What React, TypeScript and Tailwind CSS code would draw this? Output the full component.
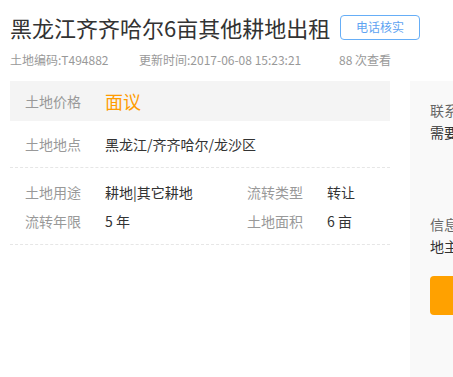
export default function App() {
  const details = [
    [
      ["土地用途", "耕地|其它耕地"],
      ["流转类型", "转让"],
    ],
    [
      ["流转年限", "5 年"],
      ["土地面积", "6 亩"],
    ],
  ];

  return (
    <div className="w-[453px] h-[377px] overflow-hidden bg-white font-['Noto_Sans_CJK_SC','Noto_Sans',sans-serif]">
      <div className="flex items-center px-[10px] pt-[11px]">
        <h1 className="w-[330px] whitespace-nowrap text-[22px] leading-[32px] text-[#333]">
          黑龙江齐齐哈尔6亩其他耕地出租
        </h1>
        <button className="w-[80px] h-[25px] border border-[#66aef7] rounded-[4px] text-[12px] text-[#5ea3f2] leading-none">
          电话核实
        </button>
      </div>

      <div className="flex px-[10px] mt-[7px] text-[12px] leading-[20px] text-[#999] whitespace-nowrap">
        <span className="w-[129px]">土地编码:T494882</span>
        <span className="w-[200px]">更新时间:2017-06-08 15:23:21</span>
        <span>88 次查看</span>
      </div>

      <div className="flex mt-[11px] pl-[10px]">
        <div className="w-[380px] shrink-0">
          <div className="flex items-center h-[40px] px-[15px] bg-[#f4f4f4]">
            <span className="w-[80px] text-[14px] text-[#999]">土地价格</span>
            <span className="text-[18px] text-[#ff9c00]">面议</span>
          </div>
          <div className="flex items-center h-[47px] px-[15px] border-b border-dashed border-[#e6e6e6]">
            <span className="w-[80px] text-[14px] text-[#999]">土地地点</span>
            <span className="text-[14px] text-[#333]">黑龙江/齐齐哈尔/龙沙区</span>
          </div>
          <div className="pt-[10px] pb-[8px] px-[15px] border-b border-dashed border-[#e6e6e6]">
            {details.map((row, i) => (
              <div key={i} className="flex items-center h-[29px] text-[14px]">
                {row.map(([label, value], j) => (
                  <div key={j} className={j === 0 ? "flex w-[222px]" : "flex"}>
                    <span className="w-[80px] text-[#999]">{label}</span>
                    <span className="text-[#333]">{value}</span>
                  </div>
                ))}
              </div>
            ))}
          </div>
        </div>

        <div className="ml-[20px] w-[220px] shrink-0 h-[300px] bg-[#f9f9f9] pl-[20px] pt-[19px] text-[14px] whitespace-nowrap">
          <div className="leading-[20px] text-[#666]">联系人：</div>
          <div className="leading-[20px] mt-[2px] text-[#333]">需要登录后才能查看</div>
          <div className="leading-[20px] mt-[72px] text-[#666]">信息来源：</div>
          <div className="leading-[20px] mt-[2px] text-[#333]">地主</div>
          <button className="mt-[20px] w-[170px] h-[39px] rounded-[4px] bg-[#ffa100] text-white text-[16px]">
            立即联系
          </button>
        </div>
      </div>
    </div>
  );
}
